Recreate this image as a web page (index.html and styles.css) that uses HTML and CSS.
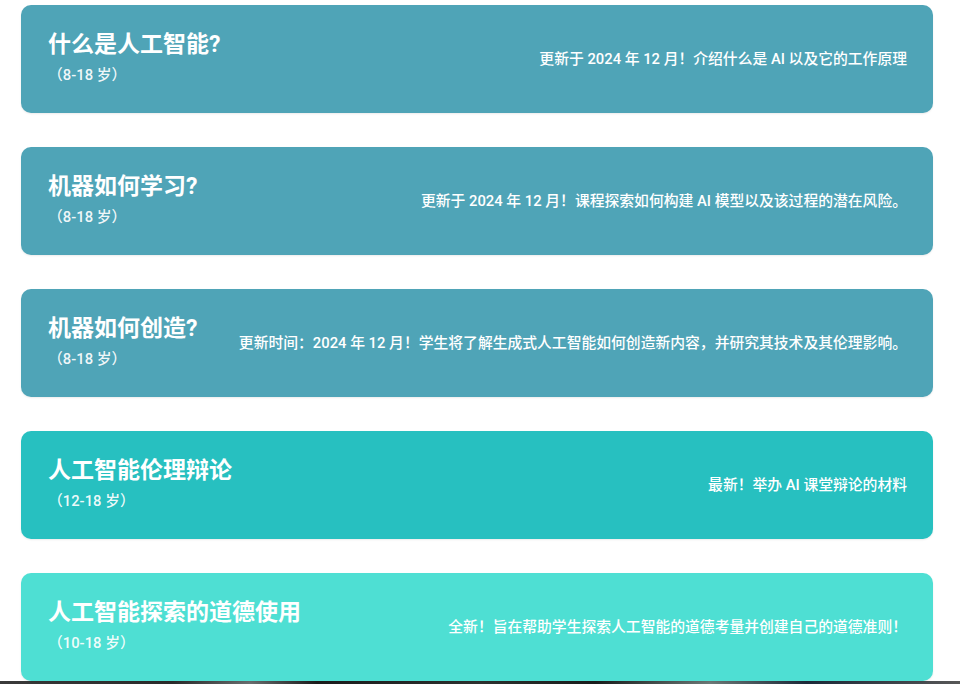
FILE: index.html
```html
<!DOCTYPE html>
<html lang="zh-CN">
<head>
<meta charset="utf-8">
<title>人工智能课程</title>
<link rel="stylesheet" href="styles.css">
</head>
<body>
<main class="list">
  <a class="card card-blue" href="#">
    <div class="card-head">
      <div class="card-title">什么是人工智能?</div>
      <div class="card-age">（8-18 岁）</div>
    </div>
    <div class="card-desc">更新于 2024 年 12 月！介绍什么是 AI 以及它的工作原理</div>
  </a>
  <a class="card card-blue" href="#">
    <div class="card-head">
      <div class="card-title">机器如何学习?</div>
      <div class="card-age">（8-18 岁）</div>
    </div>
    <div class="card-desc">更新于 2024 年 12 月！课程探索如何构建 AI 模型以及该过程的潜在风险。</div>
  </a>
  <a class="card card-blue" href="#">
    <div class="card-head">
      <div class="card-title">机器如何创造?</div>
      <div class="card-age">（8-18 岁）</div>
    </div>
    <div class="card-desc">更新时间：2024 年 12 月！学生将了解生成式人工智能如何创造新内容，并研究其技术及其伦理影响。</div>
  </a>
  <a class="card card-teal" href="#">
    <div class="card-head">
      <div class="card-title">人工智能伦理辩论</div>
      <div class="card-age">（12-18 岁）</div>
    </div>
    <div class="card-desc">最新！举办 AI 课堂辩论的材料</div>
  </a>
  <a class="card card-aqua" href="#">
    <div class="card-head">
      <div class="card-title">人工智能探索的道德使用</div>
      <div class="card-age">（10-18 岁）</div>
    </div>
    <div class="card-desc">全新！旨在帮助学生探索人工智能的道德考量并创建自己的道德准则！</div>
  </a>
</main>
<div class="bottom-strip"></div>
</body>
</html>
```

FILE: styles.css
```css
html, body {
  margin: 0;
  padding: 0;
  background: #ffffff;
}

body {
  width: 960px;
  height: 684px;
  overflow: hidden;
  font-family: Roboto, "Noto Sans CJK SC", "Noto Sans", sans-serif;
  color: #ffffff;
}

.list {
  display: flex;
  flex-direction: column;
  gap: 34px;
  padding: 5px 27px 0 21px;
}

.card {
  display: flex;
  align-items: center;
  justify-content: space-between;
  gap: 30px;
  height: 108px;
  box-sizing: border-box;
  padding: 0 26px 0 27px;
  border-radius: 10px;
  text-decoration: none;
  color: #ffffff;
  box-shadow: 0 1px 2px rgba(0, 0, 0, 0.08);
}

.card-blue { background: #4fa4b7; }
.card-teal { background: #27c0c0; }
.card-aqua { background: #4edfd3; }

.card-head {
  display: flex;
  flex-direction: column;
  gap: 6px;
  flex-shrink: 0;
  margin-bottom: 2px;
}

.card-title {
  font-size: 23px;
  line-height: 28px;
  font-weight: 700;
  white-space: nowrap;
}

.card-age {
  font-size: 14.8px;
  line-height: 20px;
  font-weight: 500;
  color: rgba(255, 255, 255, 0.93);
  white-space: nowrap;
}

.card-desc {
  font-size: 14.8px;
  line-height: 20px;
  font-weight: 500;
  white-space: nowrap;
  text-align: right;
}

.bottom-strip {
  height: 3px;
  background: linear-gradient(90deg, #3a3a3a 0%, #2b2b2b 18%, #6a6f70 26%, #1c1c1c 33%, #2e3230 50%, #1a1d1c 62%, #6d7a78 74%, #1d2a3a 84%, #575757 100%);
}
```
